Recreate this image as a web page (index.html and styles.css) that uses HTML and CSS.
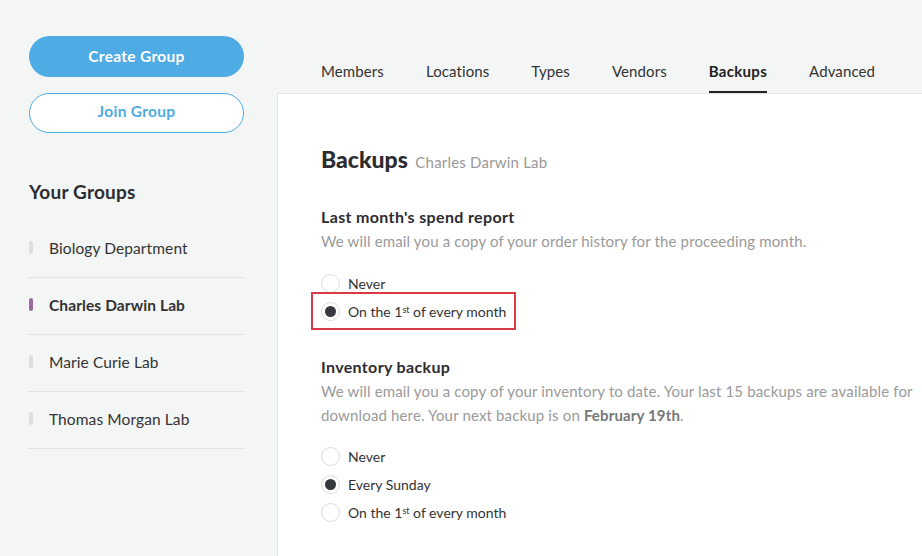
FILE: index.html
```html
<!DOCTYPE html>
<html lang="en">

<head>
    <meta charset="UTF-8">
    <meta name="viewport" content="width=device-width, initial-scale=1.0">
    <title>Backups</title>
    <link rel="stylesheet" href="styles.css">
</head>

<body>
    <div class="page">
        <div class="sidebar">
            <a href="javascript:;" class="btn btnFill">Create Group</a>
            <a href="javascript:;" class="btn btnLine">Join Group</a>
            <h3 class="groupsTitle">Your Groups</h3>
            <ul class="groupList">
                <li class="groupItem"><span class="mark"></span>Biology Department</li>
                <li class="groupItem active"><span class="mark"></span>Charles Darwin Lab</li>
                <li class="groupItem"><span class="mark"></span>Marie Curie Lab</li>
                <li class="groupItem"><span class="mark"></span>Thomas Morgan Lab</li>
            </ul>
        </div>
        <div class="main">
            <div class="tabs">
                <a href="javascript:;" class="tab">Members</a>
                <a href="javascript:;" class="tab">Locations</a>
                <a href="javascript:;" class="tab">Types</a>
                <a href="javascript:;" class="tab">Vendors</a>
                <a href="javascript:;" class="tab current">Backups</a>
                <a href="javascript:;" class="tab">Advanced</a>
            </div>
            <div class="panel">
                <h1 class="title">Backups <small>Charles Darwin Lab</small></h1>

                <div class="section">
                    <h2 class="sectionTitle">Last month's spend report</h2>
                    <p class="desc">We will email you a copy of your order history for the proceeding month.</p>
                    <div class="radios">
                        <label class="radio"><span class="dot"></span>Never</label>
                        <label class="radio checked highlight"><span class="dot"></span>On the 1<sup>st</sup>&nbsp;of every month</label>
                    </div>
                </div>

                <div class="section">
                    <h2 class="sectionTitle">Inventory backup</h2>
                    <p class="desc">We will email you a copy of your inventory to date. Your last 15 backups are available for download here. Your next backup is on <b>February 19th</b>.</p>
                    <div class="radios">
                        <label class="radio"><span class="dot"></span>Never</label>
                        <label class="radio checked"><span class="dot"></span>Every Sunday</label>
                        <label class="radio"><span class="dot"></span>On the 1<sup>st</sup>&nbsp;of every month</label>
                    </div>
                </div>
            </div>
        </div>
    </div>
</body>

</html>
```

FILE: styles.css
```css
* {
    box-sizing: border-box;
}

body {
    margin: 0;
    background: #f4f5f5;
    font-family: Lato, "Open Sans", sans-serif;
    color: #2c2c31;
    height: 556px;
    overflow: hidden;
}

.page {
    display: flex;
    height: 556px;
}

/* 左侧栏 */
.sidebar {
    width: 277px;
    flex-shrink: 0;
    padding: 36px 33px 0 29px;
}

.btn {
    display: flex;
    align-items: center;
    justify-content: center;
    height: 41px;
    padding-bottom: 2px;
    border-radius: 21px;
    font-size: 15.5px;
    font-weight: 700;
    text-decoration: none;
    letter-spacing: 0.3px;
}

.btnFill {
    background: #4eabe3;
    color: #fff;
}

.btnLine {
    margin-top: 16px;
    height: 40px;
    padding-bottom: 4px;
    background: #fff;
    border: 1px solid #4eabe3;
    color: #4eabe3;
}

.groupsTitle {
    margin: 47px 0 0;
    font-size: 19px;
    font-weight: 700;
    line-height: 24px;
    letter-spacing: 0.2px;
}

.groupList {
    list-style: none;
    margin: 17px 0 0;
    padding: 0;
}

.groupItem {
    display: flex;
    align-items: center;
    height: 57px;
    padding-bottom: 3px;
    border-bottom: 1px dotted #cfd1d1;
    font-size: 15.5px;
    letter-spacing: 0.1px;
    color: #333;
}

.mark {
    width: 4px;
    height: 13px;
    border-radius: 2px;
    background: #dcdde1;
    margin-right: 16px;
}

.groupItem.active {
    font-weight: 700;
}

.groupItem.active .mark {
    background: #9b6aa1;
}

/* 主体 */
.main {
    flex: 1;
    display: flex;
    flex-direction: column;
}

.tabs {
    height: 93px;
    display: flex;
    align-items: flex-end;
    gap: 42px;
    padding-left: 44px;
}

.tab {
    display: block;
    height: 33px;
    font-size: 15px;
    letter-spacing: 0.1px;
    color: #333;
    text-decoration: none;
    line-height: 20px;
    border-bottom: 3px solid transparent;
    margin-bottom: -1px;
}

.tab.current {
    font-weight: 700;
    letter-spacing: 0.3px;
    color: #222;
    border-bottom-color: #232327;
}

.panel {
    flex: 1;
    background: #fff;
    border-top: 1px solid #e3e4e4;
    border-left: 1px solid #e3e4e4;
    padding: 50px 0 0 43px;
}

.title {
    margin: 0;
    font-size: 23px;
    font-weight: 900;
    line-height: 30px;
}

.title small {
    font-size: 15px;
    font-weight: 400;
    color: #999;
    letter-spacing: 0.2px;
    margin-left: 2px;
}

.section {
    margin-top: 29px;
}

.section + .section {
    margin-top: 31px;
}

.sectionTitle {
    margin: 0;
    font-size: 16px;
    font-weight: 700;
    letter-spacing: 0.35px;
    line-height: 22px;
}

.desc {
    margin: 1px 0 0;
    font-size: 15px;
    letter-spacing: 0.15px;
    line-height: 24px;
    color: #9a9a9a;
}

.desc b {
    color: #777;
}

.radios {
    margin-top: 16px;
    display: flex;
    flex-direction: column;
}

.section + .section .radios {
    margin-top: 15px;
}

.radio {
    display: flex;
    align-items: center;
    height: 28px;
    font-size: 14px;
    color: #333;
}

.radio sup {
    font-size: 9px;
    line-height: 0;
    position: relative;
    top: -1px;
}

.dot {
    width: 19px;
    height: 19px;
    border-radius: 50%;
    border: 1px solid #dcdcdc;
    background: #fff;
    margin-right: 8px;
    flex-shrink: 0;
    display: flex;
    align-items: center;
    justify-content: center;
}

.checked .dot::after {
    content: "";
    width: 11px;
    height: 11px;
    border-radius: 50%;
    background: #37383d;
}

/* 标注框 */
.highlight {
    width: fit-content;
    height: 38px;
    margin: -5px 0 -5px -10px;
    padding: 0 8px;
    border: 2px solid #d93a45;
}
```
